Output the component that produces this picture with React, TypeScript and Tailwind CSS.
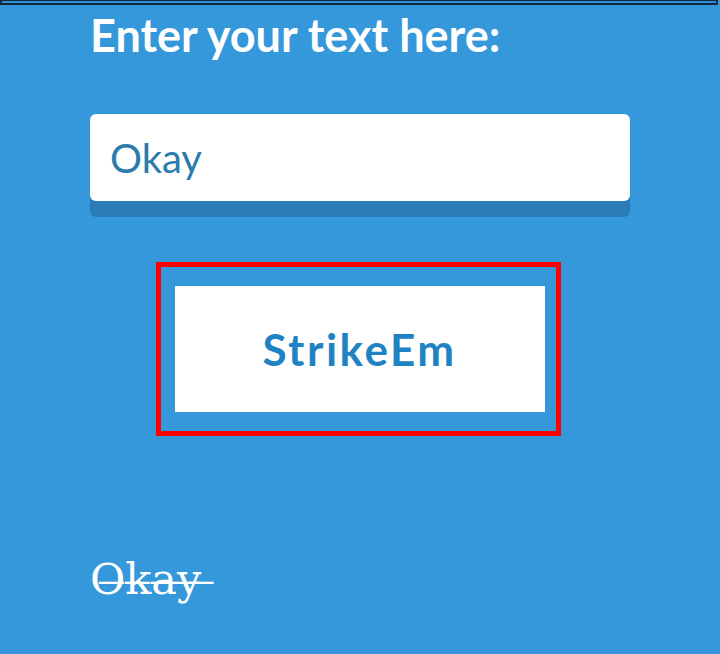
import { useState } from "react";

function strike(text: string) {
  return text
    .split("")
    .map((c) => c + "\u0336")
    .join("");
}

export default function App() {
  const [value, setValue] = useState("Okay");
  const [result, setResult] = useState("Okay");

  return (
    <div className="min-h-[654px] w-[720px] overflow-hidden bg-[#3498db] font-['Lato','Noto_Sans',sans-serif]">
      <div className="h-[5px] w-[718px] border-x-2 border-b-2 border-t border-[#102a40] bg-[#2f8fd4]" />

      <div className="mx-[90px] flex w-[540px] flex-col">
        <h1 className="mt-[3px] text-[45px] font-bold leading-[54px] text-white">
          Enter your text here:
        </h1>

        <div className="mt-[52px] flex h-[87px] items-center rounded-[6px] bg-white px-[20px] shadow-[0_16px_0_#2a7db6]">
          <input
            value={value}
            onChange={(e) => setValue(e.target.value)}
            className="w-full bg-transparent text-[40px] text-[#2b7bad] outline-none"
          />
        </div>

        <div className="mt-[61px] flex justify-center">
          <div className="ml-[-4px] flex w-[405px] border-[5px] border-[#ff0000] pb-[19px] pl-[14px] pr-[11px] pt-[19px]">
            <button
              onClick={() => setResult(value)}
              className="flex h-[126px] w-full items-center justify-center bg-white text-[44px] font-bold tracking-[2.5px] text-[#1f83c3]"
            >
              StrikeEm
            </button>
          </div>
        </div>

        <p className="mt-[118px] whitespace-pre font-['DejaVu_Serif',serif] text-[43px] leading-[50px] text-white">
          {strike(result + " ")}
        </p>
      </div>
    </div>
  );
}
